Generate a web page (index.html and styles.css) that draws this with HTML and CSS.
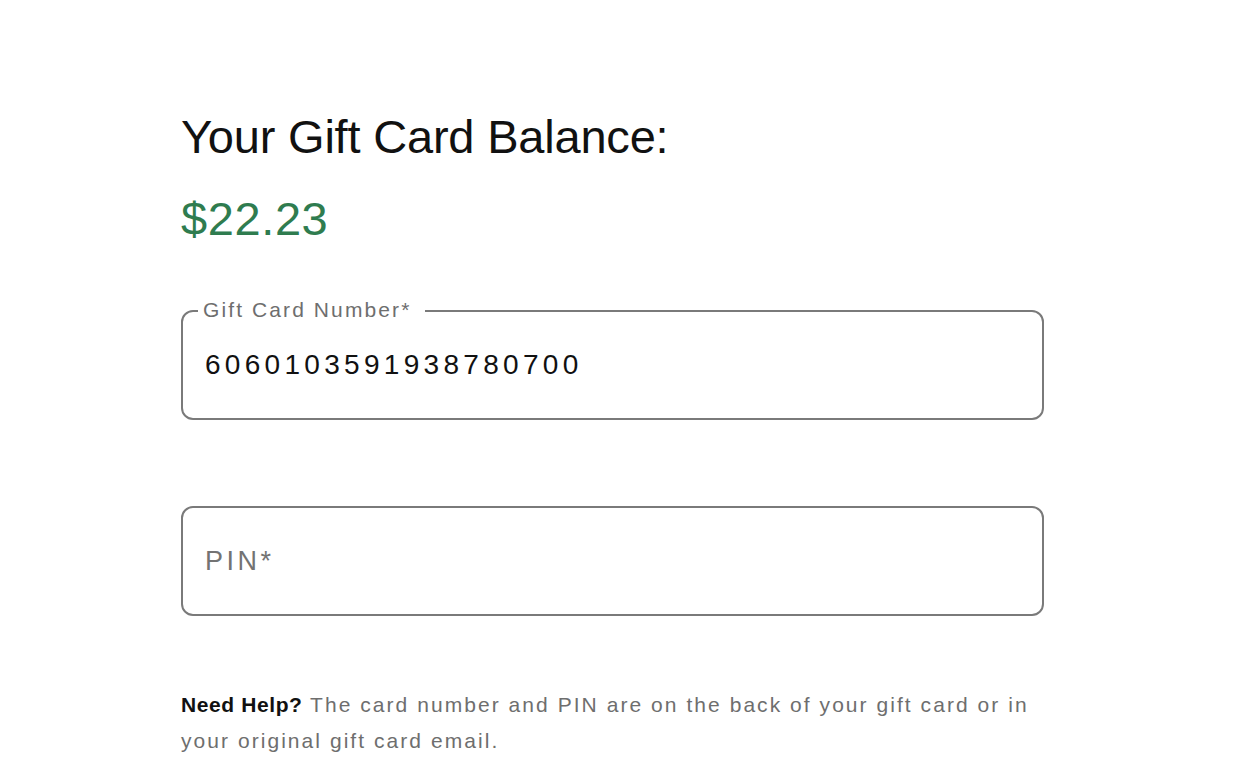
FILE: index.html
```html
<!DOCTYPE html>
<html lang="en">
<head>
<meta charset="utf-8">
<title>Gift Card Balance</title>
<link rel="stylesheet" href="styles.css">
</head>
<body>
<main class="page">
  <h1 class="title">Your Gift Card Balance:</h1>
  <p class="balance">$22.23</p>
  <form class="form">
    <div class="field field-filled">
      <span class="field-label">Gift Card Number*</span>
      <span class="field-value">6060103591938780700</span>
    </div>
    <div class="field">
      <span class="field-placeholder">PIN*</span>
    </div>
  </form>
  <p class="help"><strong class="help-strong">Need Help?</strong> The card number and PIN are on the back of your gift card or in your original gift card email.</p>
</main>
</body>
</html>
```
FILE: styles.css
```css
html, body {
  margin: 0;
  padding: 0;
  background: #ffffff;
}

body {
  font-family: "Liberation Sans", Arial, sans-serif;
  color: #111111;
}

.page {
  width: 863px;
  padding: 109px 0 0 181px;
}

.title {
  margin: 0;
  font-size: 47px;
  line-height: 56px;
  font-weight: 400;
  letter-spacing: -0.2px;
  color: #111111;
}

.balance {
  margin: 26px 0 0 0;
  font-size: 47px;
  line-height: 56px;
  font-weight: 400;
  letter-spacing: 0.6px;
  color: #2f7c4f;
}

.form {
  display: flex;
  flex-direction: column;
  gap: 86px;
  margin-top: 63px;
}

.field {
  position: relative;
  box-sizing: border-box;
  height: 110px;
  border: 2px solid #7a7a7a;
  border-radius: 12px;
  display: flex;
  align-items: center;
  padding-left: 22px;
}

.field-label {
  position: absolute;
  top: -15px;
  left: 15px;
  padding: 0 14px 0 5px;
  background: #ffffff;
  font-size: 21px;
  line-height: 26px;
  letter-spacing: 2.1px;
  color: #6e6e6e;
}

.field-value {
  font-size: 28px;
  letter-spacing: 4.3px;
  color: #111111;
}

.field-placeholder {
  font-size: 27px;
  letter-spacing: 3.5px;
  color: #737373;
}

.help {
  margin: 71px 0 0 0;
  font-size: 21px;
  line-height: 36px;
  letter-spacing: 2.05px;
  color: #6e6e6e;
}

.help-strong {
  font-weight: 700;
  color: #111111;
  letter-spacing: 0.6px;
}
```
